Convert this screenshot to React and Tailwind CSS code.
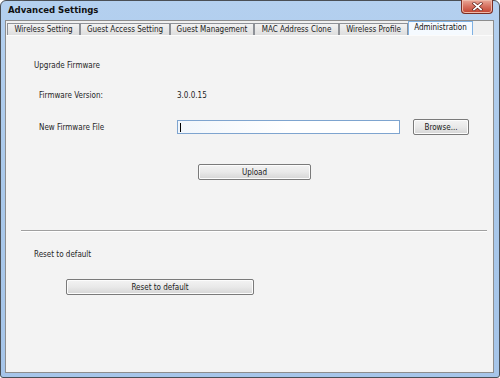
export default function App() {
  const font = { fontFamily: '"DejaVu Sans Condensed", "DejaVu Sans", "Liberation Sans", sans-serif' };
  const tabs = [
    { label: "Wireless Setting", w: "w-[73px]" },
    { label: "Guest Access Setting", w: "w-[90px]" },
    { label: "Guest Management", w: "w-[84px]" },
    { label: "MAC Address Clone", w: "w-[85px]" },
    { label: "Wireless Profile", w: "w-[69px]" },
  ];
  const btn =
    "flex items-center justify-center h-[16px] border border-[#7a7a7a] rounded-[2px] bg-gradient-to-b from-[#f3f3f3] via-[#e9e9e9] to-[#d5d5d5] text-[8px] text-[#1a1a1a] shadow-[inset_0_0_0_1px_#fcfcfc]";
  return (
    <div
      className="w-[500px] h-[378px] border border-[#4a4f55] rounded-t-[6px] rounded-b-[3px] bg-gradient-to-b from-[#b4d0ef] via-[#a9c8ea] to-[#a6c5e9] flex flex-col pl-[4px] pr-[5px] pb-[4px] text-[#1e1e1e]"
      style={font}
    >
      <div className="h-[19px] flex justify-between items-start">
        <div className="mt-[3px] ml-[3px] text-[9.5px] font-bold leading-[12px] text-[#111]">Advanced Settings</div>
        <div className="-mt-[1px] mr-[1px] w-[32px] h-[14px] rounded-b-[4px] border border-[#7b2e24] border-t-0 bg-gradient-to-b from-[#e9a898] via-[#d6705f] to-[#c0402d] flex items-center justify-center shadow-[inset_0_0_0_1px_#efb9a9]">
          <svg width="11" height="9" viewBox="0 0 11 9">
            <path d="M2 1.5 L9 7.5 M9 1.5 L2 7.5" stroke="#5a1a12" strokeWidth="3" strokeLinecap="square" />
            <path d="M2 1.5 L9 7.5 M9 1.5 L2 7.5" stroke="#ffffff" strokeWidth="1.8" strokeLinecap="square" />
          </svg>
        </div>
      </div>
      <div className="flex-1 border border-[#8d8d8d] bg-[#f3f3f3] flex flex-col">
        <div className="h-[14px] flex items-end pl-[1px] bg-[#f0f0f0]">
          {tabs.map((t) => (
            <div
              key={t.label}
              className={`${t.w} h-[12px] border border-b-0 border-[#8e9197] bg-gradient-to-b from-[#f2f2f2] to-[#dedede] text-[8px] leading-[11px] text-center text-[#222] whitespace-nowrap overflow-hidden`}
            >
              {t.label}
            </div>
          ))}
          <div className="w-[65px] h-[15px] -mb-[1px] border border-b-0 border-[#7fb1e3] bg-[#f5faff] text-[8px] leading-[12px] text-center text-[#111] whitespace-nowrap">
            Administration
          </div>
        </div>
        <div className="flex-1 flex flex-col border-t border-[#fbfbfb] text-[8px] leading-[11px]">
          <div className="mt-[24px] pl-[28px] h-[11px]">Upgrade Firmware</div>
          <div className="mt-[19px] pl-[33px] h-[11px] flex">
            <div className="w-[138px]">Firmware Version:</div>
            <div>3.0.0.15</div>
          </div>
          <div className="mt-[18px] pl-[33px] h-[16px] flex items-center">
            <div className="w-[138px]">New Firmware File</div>
            <div className="w-[223px] h-[14px] border border-[#7ea4cf] bg-gradient-to-r from-[#f1f6fb] via-white to-white flex items-center pl-[2px]">
              <div className="w-[1px] h-[9px] bg-black" />
            </div>
            <div className={`${btn} ml-[13px] w-[56px]`}>Browse...</div>
          </div>
          <div className={`${btn} mt-[29px] ml-[192px] w-[113px]`}>Upload</div>
          <div className="mt-[50px] ml-[15px] w-[466px] h-[2px] border-t border-[#a0a0a0] border-b border-b-[#ffffff]" />
          <div className="mt-[17px] pl-[28px] h-[11px]">Reset to default</div>
          <div className={`${btn} mt-[19px] ml-[60px] w-[188px]`}>Reset to default</div>
        </div>
      </div>
    </div>
  );
}
